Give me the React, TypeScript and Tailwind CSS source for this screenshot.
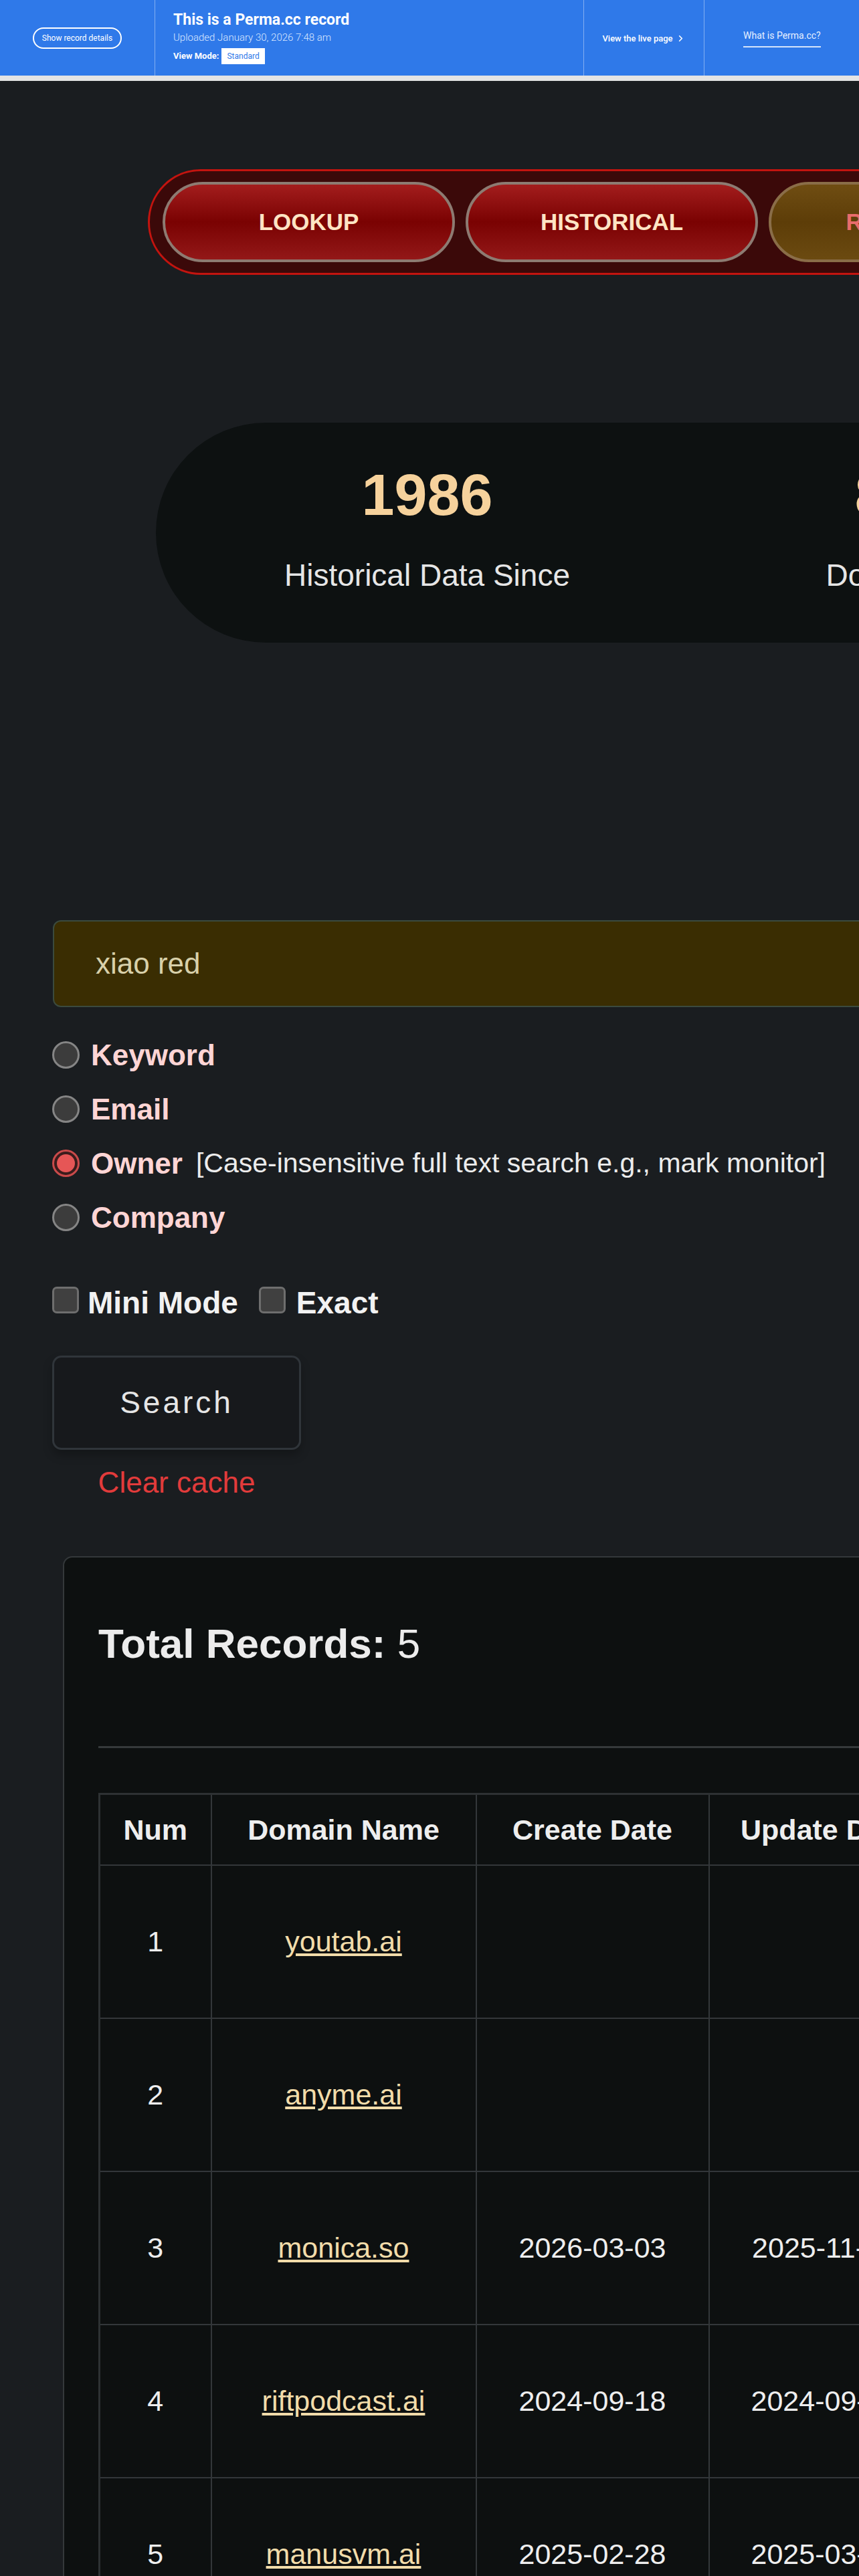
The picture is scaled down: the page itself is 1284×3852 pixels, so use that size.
import { ChevronRight } from 'lucide-react'

type Row = { num: number; domain: string; created: string; updated: string; expires: string; registrar: string }

const ROWS: Row[] = [
  { num: 1, domain: 'youtab.ai',      created: '',           updated: '',           expires: '',           registrar: '' },
  { num: 2, domain: 'anyme.ai',       created: '',           updated: '',           expires: '',           registrar: '' },
  { num: 3, domain: 'monica.so',      created: '2026-03-03', updated: '2025-11-05', expires: '2027-03-03', registrar: 'Dynadot' },
  { num: 4, domain: 'riftpodcast.ai', created: '2024-09-18', updated: '2024-09-23', expires: '2026-09-18', registrar: 'Dynadot' },
  { num: 5, domain: 'manusvm.ai',     created: '2025-02-28', updated: '2025-03-04', expires: '2027-02-28', registrar: 'Dynadot' },
]

const MODES = [
  { label: 'Keyword', checked: false },
  { label: 'Email',   checked: false },
  { label: 'Owner',   checked: true, hint: '[Case-insensitive full text search e.g., mark monitor]' },
  { label: 'Company', checked: false },
]

function PermaBanner() {
  return (
    <div className="flex h-[113px] bg-[#2f79e9] font-['Roboto',sans-serif] text-white">
      <div className="flex w-[232px] shrink-0 items-center justify-center border-r border-white/40">
        <span className="rounded-full border-2 border-white px-[12px] py-[8px] text-[12px] leading-none">
          Show record details
        </span>
      </div>
      <div className="flex w-[641px] shrink-0 flex-col border-r border-white/40 pl-[27px] pt-[16px]">
        <p className="text-[23px] font-bold leading-[28px]">This is a Perma.cc record</p>
        <p className="mt-[2px] text-[15px] font-light leading-[20px] text-[#dce8ff]">Uploaded January 30, 2026 7:48 am</p>
        <div className="mt-[6px] flex items-center gap-[4px]">
          <span className="text-[13px] font-bold">View Mode:</span>
          <span className="bg-white px-[8px] py-[6px] text-[12px] leading-none text-[#2f79e9]">Standard</span>
        </div>
      </div>
      <div className="flex w-[180px] shrink-0 items-center justify-center gap-[4px] border-r border-white/40 pt-[2px] text-[13px] font-medium">
        View the live page
        <ChevronRight className="h-[15px] w-[15px]" strokeWidth={2.5} />
      </div>
      <div className="flex flex-1 items-center pl-[58px]">
        <span className="border-b-2 border-white/80 pb-[5px] text-[14px] text-[#e8f0ff]">What is Perma.cc?</span>
      </div>
    </div>
  )
}

export default function App() {
  return (
    <div className="w-[1284px] overflow-hidden bg-[#1a1d20] font-['Liberation_Sans',Arial,sans-serif]">
      <PermaBanner />
      <div className="h-[8px] bg-[#e4e4e4]" />

      <main className="pb-24">

        {/* ── Nav pill ─────────────────────────────────────── */}
        <nav className="ml-[221px] mt-[132px] flex w-max items-center gap-4 rounded-full border-[3px] border-[#c3140f] bg-[#3b0909] px-[19px] py-[16px]">
          {['LOOKUP', 'HISTORICAL'].map(label => (
            <button
              key={label}
              className="flex h-[120px] w-[437px] shrink-0 items-center justify-center rounded-full border-[4px] border-[#8d7b72] bg-[linear-gradient(180deg,#a31d1d_0%,#7a0202_50%,#931818_100%)] text-[35px] font-bold text-[#ffe4c4]"
            >
              {label}
            </button>
          ))}
          <button className="flex h-[120px] w-[437px] shrink-0 items-center justify-center rounded-full border-[4px] border-[#8a6d48] bg-[linear-gradient(180deg,#6f4d12_0%,#5d3d08_50%,#6b4a10_100%)] text-[35px] font-bold text-[#e86c6c]">
            REGISTRAR
          </button>
        </nav>

        {/* ── Stats ────────────────────────────────────────── */}
        <div className="ml-[233px] mt-[221px] flex h-[329px] w-max items-start rounded-[165px] bg-[#0d1111] pl-[18px] pt-[64px]">
          {[
            { value: '1986',  label: 'Historical Data Since' },
            { value: '800M+', label: 'Domains Tracked' },
          ].map(s => (
            <div key={s.label} className="flex w-[775px] flex-col items-center">
              <p className="text-[88px] font-bold leading-none text-[#f6d29c]">{s.value}</p>
              <p className="mt-[53px] text-[46px] leading-none text-[#e6e6e6]">{s.label}</p>
            </div>
          ))}
        </div>

        {/* ── Search form ──────────────────────────────────── */}
        <input
          readOnly
          value="xiao red"
          className="ml-[79px] mt-[415px] block h-[130px] w-[1500px] rounded-[12px] border-2 border-[#3b4a3e] bg-[#3a2d02] pl-[62px] text-[44px] text-[#d8d0aa] outline-none"
        />

        <div className="ml-[78px] mt-[31px]">
          {MODES.map(m => (
            <div key={m.label} className="flex h-[81px] items-center">
              {m.checked ? (
                <span className="flex h-[41px] w-[41px] shrink-0 items-center justify-center rounded-full border-[3px] border-[#c94a4a] bg-[#3b1c1c]">
                  <span className="h-[27px] w-[27px] rounded-full bg-[#e65656]" />
                </span>
              ) : (
                <span className="h-[41px] w-[41px] shrink-0 rounded-full border-[3px] border-[#858585] bg-[#3c3c3c]" />
              )}
              <span className="ml-[17px] text-[44px] font-bold text-[#ffd5d5]">{m.label}</span>
              {m.hint && <span className="ml-[20px] text-[41px] text-[#ececec]">{m.hint}</span>}
            </div>
          ))}
        </div>

        <div className="ml-[78px] mt-[61px] flex items-start">
          <span className="mt-[2px] h-[40px] w-[40px] shrink-0 rounded-[7px] border-[3px] border-[#6e6e6e] bg-[#404040]" />
          <span className="ml-[13px] text-[46px] font-bold leading-[53px] text-[#f2f2f2]">Mini Mode</span>
          <span className="ml-[31px] mt-[2px] h-[40px] w-[40px] shrink-0 rounded-[7px] border-[3px] border-[#6e6e6e] bg-[#404040]" />
          <span className="ml-[16px] text-[46px] font-bold leading-[53px] text-[#f2f2f2]">Exact</span>
        </div>

        <div className="ml-[78px] mt-[52px] w-[372px]">
          <button className="flex h-[141px] w-[372px] items-center justify-center rounded-[14px] border-[3px] border-[#30353a] bg-[#17191c] text-[46px] tracking-[4px] text-[#e6e6e6] shadow-[0_8px_14px_rgba(0,0,0,0.25)]">
            Search
          </button>
          <p className="mt-[16px] text-center text-[44px] text-[#e23b3b]">Clear cache</p>
        </div>

        {/* ── Results ──────────────────────────────────────── */}
        <div className="ml-[94px] mt-[77px] w-[2100px] rounded-[14px] border-2 border-[#34383a] bg-[#0d1010] pl-[51px] pt-[82px] pb-16">
          <h2 className="text-[62px] text-[#ececec]">
            <span className="font-bold">Total Records:</span> 5
          </h2>

          <div className="mt-[107px] w-[1950px] border-t-[3px] border-[#35393b]" />

          <table className="mt-[67px] w-[1903px] table-fixed border-collapse border-[3px] border-[#2d3133] text-center text-[43px] text-[#eeeeee]">
            <colgroup>
              <col className="w-[167px]" />
              <col className="w-[396px]" />
              <col className="w-[348px]" />
              <col className="w-[346px]" />
              <col className="w-[346px]" />
              <col className="w-[300px]" />
            </colgroup>
            <thead>
              <tr className="h-[106px]">
                {['Num', 'Domain Name', 'Create Date', 'Update Date', 'Expiry Date', 'Registrar'].map(h => (
                  <th key={h} className="border-2 border-[#33373a] font-bold">{h}</th>
                ))}
              </tr>
            </thead>
            <tbody>
              {ROWS.map(r => (
                <tr key={r.num} className="h-[229px]">
                  <td className="border-2 border-[#33373a]">{r.num}</td>
                  <td className="border-2 border-[#33373a]">
                    <a href="#" className="text-[#f2dcaa] underline underline-offset-[3px]">{r.domain}</a>
                  </td>
                  <td className="border-2 border-[#33373a]">{r.created}</td>
                  <td className="border-2 border-[#33373a]">{r.updated}</td>
                  <td className="border-2 border-[#33373a]">{r.expires}</td>
                  <td className="border-2 border-[#33373a]">{r.registrar}</td>
                </tr>
              ))}
            </tbody>
          </table>
        </div>

      </main>
    </div>
  )
}
